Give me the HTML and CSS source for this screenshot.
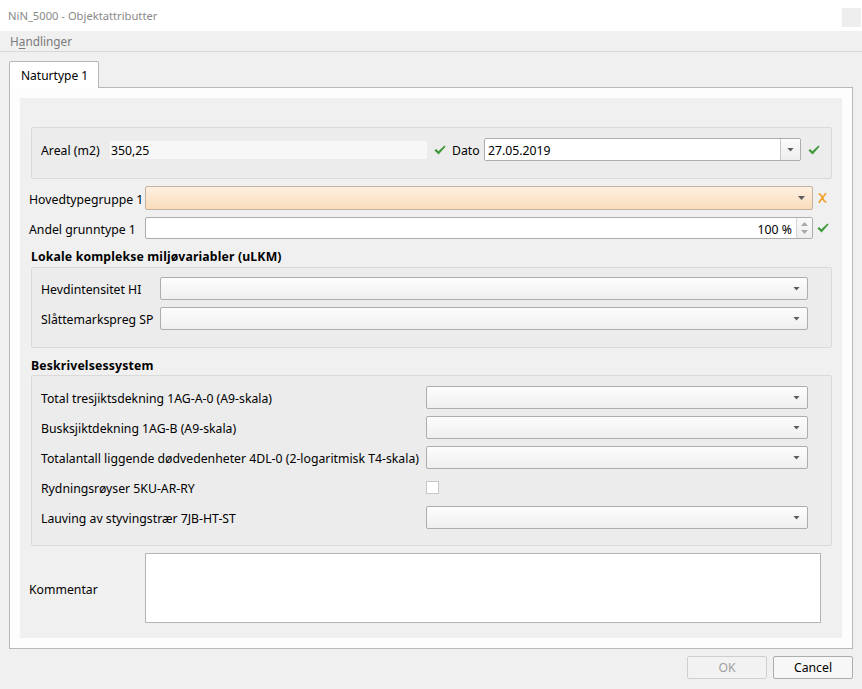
FILE: index.html
```html
<!DOCTYPE html>
<html lang="no">
<head>
<meta charset="utf-8">
<title>NiN_5000 - Objektattributter</title>
<link rel="stylesheet" href="styles.css">
</head>
<body>
<div class="window">
  <header class="titlebar">
    <span class="title">NiN_5000 - Objektattributter</span>
    <span class="close"></span>
  </header>
  <nav class="menubar"><span class="menu">H<u>a</u>ndlinger</span></nav>

  <div class="tabbar"><div class="tab">Naturtype 1</div></div>
  <section class="pane">
    <div class="scroll">
      <div class="group group-top">
        <span class="lbl-areal txt">Areal (m2)</span>
        <div class="ro-field"><span class="txt">350,25</span></div>
        <span class="icon-cell icon-cell-a"><svg class="check" width="12" height="10" viewBox="0 0 12 10"><path d="M0.4 5.4 L2.1 4 L4.4 6.2 L10.4 0.4 L11.6 1.6 L4.6 9.4 Z"/></svg></span>
        <span class="lbl-dato txt">Dato</span>
        <div class="date-combo"><span class="value txt">27.05.2019</span><span class="dbtn"><i class="arrow"></i></span></div>
        <span class="icon-cell icon-cell-b"><svg class="check" width="12" height="10" viewBox="0 0 12 10"><path d="M0.4 5.4 L2.1 4 L4.4 6.2 L10.4 0.4 L11.6 1.6 L4.6 9.4 Z"/></svg></span>
      </div>

      <div class="row row-hoved">
        <span class="lbl txt">Hovedtypegruppe 1</span>
        <div class="combo combo-warn"><i class="arrow"></i></div>
        <span class="icon-cell"><svg class="cross" width="9" height="10" viewBox="0 0 9 10"><path d="M1.2 1.2 C2.5 1 3.5 3 4.5 5 C5.5 7 6.5 9.2 7.8 9 M7.6 0.8 C5.5 3.5 3.5 6 1.2 9.2"/></svg></span>
      </div>

      <div class="row row-andel">
        <span class="lbl txt">Andel grunntype 1</span>
        <div class="spinbox"><span class="spin-value txt">100 %</span><span class="spin"><i class="up"></i><i class="down"></i></span></div>
        <span class="icon-cell"><svg class="check" width="12" height="10" viewBox="0 0 12 10"><path d="M0.4 5.4 L2.1 4 L4.4 6.2 L10.4 0.4 L11.6 1.6 L4.6 9.4 Z"/></svg></span>
      </div>

      <h3 class="section-title first">Lokale komplekse miljøvariabler (uLKM)</h3>
      <div class="group group-ulkm">
        <div class="grow"><span class="glbl txt">Hevdintensitet HI</span><div class="combo"><i class="arrow"></i></div></div>
        <div class="grow"><span class="glbl txt">Slåttemarkspreg SP</span><div class="combo"><i class="arrow"></i></div></div>
      </div>

      <h3 class="section-title second">Beskrivelsessystem</h3>
      <div class="group group-beskr">
        <div class="grow"><span class="glbl txt">Total tresjiktsdekning 1AG-A-0 (A9-skala)</span><div class="combo"><i class="arrow"></i></div></div>
        <div class="grow"><span class="glbl txt">Busksjiktdekning 1AG-B (A9-skala)</span><div class="combo"><i class="arrow"></i></div></div>
        <div class="grow"><span class="glbl txt">Totalantall liggende dødvedenheter 4DL-0 (2-logaritmisk T4-skala)</span><div class="combo"><i class="arrow"></i></div></div>
        <div class="grow"><span class="glbl txt">Rydningsrøyser 5KU-AR-RY</span><span class="checkbox"></span></div>
        <div class="grow"><span class="glbl txt">Lauving av styvingstrær 7JB-HT-ST</span><div class="combo"><i class="arrow"></i></div></div>
      </div>

      <div class="row row-komm">
        <span class="lbl txt">Kommentar</span>
        <div class="textarea"></div>
      </div>
    </div>
  </section>

  <footer class="buttons">
    <button class="btn btn-disabled" type="button">OK</button>
    <button class="btn" type="button">Cancel</button>
  </footer>
</div>
</body>
</html>
```

FILE: styles.css
```css
* { box-sizing: border-box; }
html, body { margin: 0; padding: 0; }
body {
  width: 862px;
  height: 689px;
  overflow: hidden;
  background: #f0f0f0;
  font-family: "Noto Sans", "Open Sans", sans-serif;
  font-size: 12.25px;
  color: #000;
}
.txt { padding-top: 2px; }

.titlebar {
  height: 31px;
  background: #fff;
  display: flex;
  justify-content: space-between;
  align-items: flex-start;
  padding-left: 8px;
}
.title { color: #8a8a8a; line-height: 31px; font-size: 11.2px; }
.close {
  width: 19px;
  height: 19px;
  margin-top: 8px;
  margin-right: 1px;
  background: #eeeeee;
}

.menubar {
  height: 21px;
  border-bottom: 1px solid #d8d8d8;
  padding-left: 10px;
  display: flex;
  align-items: center;
  color: #7a7a7a;
  font-size: 11.8px;
}
.menu u { text-decoration: underline; text-underline-offset: 2px; }

.tabbar { display: flex; padding: 9px 0 0 9px; }
.tab {
  position: relative;
  z-index: 1;
  width: 90px;
  height: 27px;
  margin-bottom: -1px;
  padding: 1px 0 0 11px;
  background: #fff;
  border: 1px solid #b7b7b7;
  border-bottom: none;
  border-radius: 2px 2px 0 0;
  display: flex;
  align-items: center;
  font-size: 12px;
}

.pane {
  margin-left: 9px;
  width: 844px;
  height: 562px;
  border: 1px solid #b7b7b7;
  background: #fdfdfd;
  padding: 10px;
}
.scroll {
  height: 540px;
  background: #f0f0f0;
  padding: 29px 10px 0 9px;
  display: flex;
  flex-direction: column;
}

.group {
  margin-left: 2px;
  border: 1px solid #dadada;
  border-radius: 2px;
  background: #ececec;
}
.group-top {
  height: 52px;
  padding: 10px 0 17px 9px;
  display: flex;
  align-items: center;
}
.lbl-areal { width: 69px; }
.ro-field {
  width: 317px;
  height: 18px;
  background: #f7f7f7;
  padding-left: 1px;
  display: flex;
  align-items: center;
}
.icon-cell { display: flex; align-items: center; justify-content: center; }
.icon-cell-a { width: 25px; }
.lbl-dato { width: 32px; }
.icon-cell-b { width: 26px; }
.check { fill: #3f9a3a; }
.cross { fill: none; stroke: #f0a02c; stroke-width: 1.7; stroke-linecap: round; }

.date-combo {
  width: 317px;
  height: 23px;
  background: #fff;
  border: 1px solid #adadad;
  border-radius: 2px;
  display: flex;
  align-items: stretch;
}
.date-combo .value { flex: 1; padding-left: 3px; display: flex; align-items: center; }
.dbtn {
  width: 20px;
  border-left: 1px solid #c9c9c9;
  background: linear-gradient(#fbfbfb, #eeeeee);
  display: flex;
  align-items: center;
  justify-content: center;
}

.arrow {
  display: block;
  width: 7px;
  height: 4px;
  background: #5c5c5c;
  clip-path: polygon(0 0, 100% 0, 50% 100%);
}

.row { display: flex; align-items: center; }
.row .lbl { width: 116px; }
.row .icon-cell { width: 19px; }
.row-hoved { margin-top: 7px; height: 24px; }
.row-andel { margin-top: 7px; height: 22px; }
.row-komm { margin-top: 7px; height: 70px; }

.combo {
  flex: 1;
  height: 100%;
  border: 1px solid #adadad;
  border-radius: 2px;
  background: linear-gradient(#fdfdfd, #efefef);
  display: flex;
  align-items: center;
  justify-content: flex-end;
  padding-right: 7px;
}
.combo-warn {
  height: 24px;
  border-color: #c4b29e;
  background: linear-gradient(#fdf0e1, #fadcbb);
}

.spinbox {
  flex: 1;
  height: 22px;
  background: #fff;
  border: 1px solid #adadad;
  border-radius: 2px;
  display: flex;
  align-items: stretch;
}
.spin-value { flex: 1; display: flex; align-items: center; justify-content: flex-end; padding-right: 4px; }
.spin {
  width: 16px;
  border-left: 1px solid #d4d4d4;
  background: linear-gradient(#fafafa, #eeeeee);
  display: flex;
  flex-direction: column;
  align-items: center;
  justify-content: center;
  gap: 4px;
}
.spin i {
  display: block;
  width: 7px;
  height: 4px;
  background: #a8a8a8;
}
.spin .up { clip-path: polygon(50% 0, 100% 100%, 0 100%); }
.spin .down { clip-path: polygon(0 0, 100% 0, 50% 100%); }

.section-title {
  margin: 0 0 0 2px;
  height: 16px;
  line-height: 18px;
  font-size: 12.25px;
  font-weight: bold;
  letter-spacing: 0.15px;
}
.section-title.first { margin-top: 9px; margin-bottom: 3px; }
.section-title.second { margin-top: 9px; margin-bottom: 2px; }

.group-ulkm {
  height: 81px;
  padding: 9px 23px 0 9px;
  display: flex;
  flex-direction: column;
  gap: 7px;
}
.group-beskr {
  height: 171px;
  padding: 10px 23px 0 9px;
  display: flex;
  flex-direction: column;
  gap: 7px;
}
.grow { display: flex; align-items: center; height: 23px; }
.group-ulkm .glbl { width: 119px; }
.group-beskr .glbl { width: 385px; }
.checkbox {
  width: 13px;
  height: 13px;
  border: 1px solid #c6c6c6;
  background: #fff;
}

.textarea {
  width: 676px;
  height: 70px;
  border: 1px solid #b4b4b4;
  background: #fff;
}

.buttons {
  display: flex;
  justify-content: flex-end;
  gap: 6px;
  padding: 7px 9px 0 0;
}
.btn {
  width: 80px;
  height: 23px;
  border: 1px solid #adadad;
  border-radius: 2px;
  background: #f7f7f7;
  font-family: inherit;
  font-size: 12.25px;
  color: #000;
  padding: 0;
}
.btn-disabled { color: #a0a0a0; border-color: #cfcfcf; background: #f2f2f2; }
```
